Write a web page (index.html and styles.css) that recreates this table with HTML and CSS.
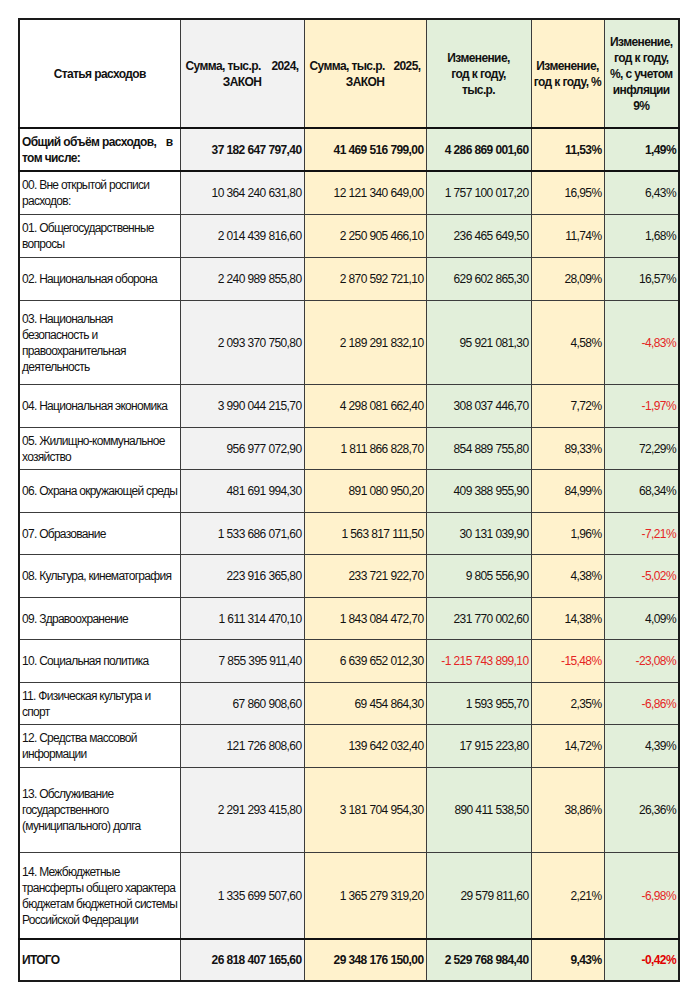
FILE: index.html
```html
<!DOCTYPE html>
<html lang="ru">
<head>
<meta charset="utf-8">
<link rel="stylesheet" href="styles.css">
</head>
<body>
<table class="budget">
  <colgroup>
    <col class="c1"><col class="c2"><col class="c3"><col class="c4"><col class="c5"><col class="c6">
  </colgroup>
  <thead>
    <tr class="head">
      <th class="name">Статья расходов</th>
      <th class="gray wide"><span class="spread"><span>Сумма, тыс.р.</span><span>2024,</span></span>ЗАКОН</th>
      <th class="yel wide"><span class="spread"><span>Сумма, тыс.р.</span><span>2025,</span></span>ЗАКОН</th>
      <th class="grn">Изменение,<br>год к году,<br>тыс.р.</th>
      <th class="yel">Изменение,<br>год к году, %</th>
      <th class="grn">Изменение,<br>год к году,<br>%, с учетом<br>инфляции<br>9%</th>
    </tr>
  </thead>
  <tbody>
    <tr class="total h42">
      <td class="name jl"><span class="spread"><span>Общий объём расходов,</span><span>в</span></span>том числе:</td>
      <td class="gray">37 182 647 797,40</td>
      <td class="yel">41 469 516 799,00</td>
      <td class="grn">4 286 869 001,60</td>
      <td class="yel">11,53%</td>
      <td class="grn">1,49%</td>
    </tr>
    <tr class="h43">
      <td class="name">00. Вне открытой росписи расходов:</td>
      <td class="gray">10 364 240 631,80</td>
      <td class="yel">12 121 340 649,00</td>
      <td class="grn">1 757 100 017,20</td>
      <td class="yel">16,95%</td>
      <td class="grn">6,43%</td>
    </tr>
    <tr class="h43">
      <td class="name">01. Общегосударственные вопросы</td>
      <td class="gray">2 014 439 816,60</td>
      <td class="yel">2 250 905 466,10</td>
      <td class="grn">236 465 649,50</td>
      <td class="yel">11,74%</td>
      <td class="grn">1,68%</td>
    </tr>
    <tr class="h43">
      <td class="name">02. Национальная оборона</td>
      <td class="gray">2 240 989 855,80</td>
      <td class="yel">2 870 592 721,10</td>
      <td class="grn">629 602 865,30</td>
      <td class="yel">28,09%</td>
      <td class="grn">16,57%</td>
    </tr>
    <tr class="h84">
      <td class="name">03. Национальная безопасность и правоохранительная деятельность</td>
      <td class="gray">2 093 370 750,80</td>
      <td class="yel">2 189 291 832,10</td>
      <td class="grn">95 921 081,30</td>
      <td class="yel">4,58%</td>
      <td class="grn neg">-4,83%</td>
    </tr>
    <tr class="h43">
      <td class="name">04. Национальная экономика</td>
      <td class="gray">3 990 044 215,70</td>
      <td class="yel">4 298 081 662,40</td>
      <td class="grn">308 037 446,70</td>
      <td class="yel">7,72%</td>
      <td class="grn neg">-1,97%</td>
    </tr>
    <tr class="h42">
      <td class="name">05. Жилищно-коммунальное хозяйство</td>
      <td class="gray">956 977 072,90</td>
      <td class="yel">1 811 866 828,70</td>
      <td class="grn">854 889 755,80</td>
      <td class="yel">89,33%</td>
      <td class="grn">72,29%</td>
    </tr>
    <tr class="h43">
      <td class="name">06. Охрана окружающей среды</td>
      <td class="gray">481 691 994,30</td>
      <td class="yel">891 080 950,20</td>
      <td class="grn">409 388 955,90</td>
      <td class="yel">84,99%</td>
      <td class="grn">68,34%</td>
    </tr>
    <tr class="h42">
      <td class="name">07. Образование</td>
      <td class="gray">1 533 686 071,60</td>
      <td class="yel">1 563 817 111,50</td>
      <td class="grn">30 131 039,90</td>
      <td class="yel">1,96%</td>
      <td class="grn neg">-7,21%</td>
    </tr>
    <tr class="h43">
      <td class="name">08. Культура, кинематография</td>
      <td class="gray">223 916 365,80</td>
      <td class="yel">233 721 922,70</td>
      <td class="grn">9 805 556,90</td>
      <td class="yel">4,38%</td>
      <td class="grn neg">-5,02%</td>
    </tr>
    <tr class="h42">
      <td class="name">09. Здравоохранение</td>
      <td class="gray">1 611 314 470,10</td>
      <td class="yel">1 843 084 472,70</td>
      <td class="grn">231 770 002,60</td>
      <td class="yel">14,38%</td>
      <td class="grn">4,09%</td>
    </tr>
    <tr class="h43">
      <td class="name">10. Социальная политика</td>
      <td class="gray">7 855 395 911,40</td>
      <td class="yel">6 639 652 012,30</td>
      <td class="grn neg">-1 215 743 899,10</td>
      <td class="yel neg">-15,48%</td>
      <td class="grn neg">-23,08%</td>
    </tr>
    <tr class="h42">
      <td class="name">11. Физическая культура и спорт</td>
      <td class="gray">67 860 908,60</td>
      <td class="yel">69 454 864,30</td>
      <td class="grn">1 593 955,70</td>
      <td class="yel">2,35%</td>
      <td class="grn neg">-6,86%</td>
    </tr>
    <tr class="h43">
      <td class="name">12. Средства массовой информации</td>
      <td class="gray">121 726 808,60</td>
      <td class="yel">139 642 032,40</td>
      <td class="grn">17 915 223,80</td>
      <td class="yel">14,72%</td>
      <td class="grn">4,39%</td>
    </tr>
    <tr class="h85">
      <td class="name">13. Обслуживание государственного (муниципального) долга</td>
      <td class="gray">2 291 293 415,80</td>
      <td class="yel">3 181 704 954,30</td>
      <td class="grn">890 411 538,50</td>
      <td class="yel">38,86%</td>
      <td class="grn">26,36%</td>
    </tr>
    <tr class="h86">
      <td class="name">14. Межбюджетные трансферты общего характера бюджетам бюджетной системы Российской Федерации</td>
      <td class="gray">1 335 699 507,60</td>
      <td class="yel">1 365 279 319,20</td>
      <td class="grn">29 579 811,60</td>
      <td class="yel">2,21%</td>
      <td class="grn neg">-6,98%</td>
    </tr>
    <tr class="total final h41">
      <td class="name">ИТОГО</td>
      <td class="gray">26 818 407 165,60</td>
      <td class="yel">29 348 176 150,00</td>
      <td class="grn">2 529 768 984,40</td>
      <td class="yel">9,43%</td>
      <td class="grn neg">-0,42%</td>
    </tr>
  </tbody>
</table>
</body>
</html>
```
FILE: styles.css
```css
html, body {
  margin: 0;
  padding: 0;
  background: #ffffff;
}

.budget {
  margin: 18px 0 0 18px;
  width: 660px;
  table-layout: fixed;
  border-collapse: collapse;
  border: 2px solid #1a1a1a;
  font-family: "Liberation Sans", Arial, sans-serif;
  font-size: 12px;
  line-height: 16px;
  letter-spacing: -0.6px;
  color: #111111;
}

.c1 { width: 161px; }
.c2 { width: 124px; }
.c3 { width: 122px; }
.c4 { width: 105px; }
.c5 { width: 73px; }
.c6 { width: 75px; }

.budget th,
.budget td {
  border: 1px solid #3c3c3c;
  padding: 0 2px 0 2px;
  vertical-align: middle;
}

.budget td {
  text-align: right;
}

.budget td.name {
  text-align: left;
  padding: 0 0 0 2px;
  letter-spacing: -0.72px;
}

.budget th {
  font-weight: bold;
  text-align: center;
  height: 107px;
  border-bottom: 2px solid #111111;
}

.budget th.name {
  letter-spacing: -0.6px;
}

.budget th.wide {
  padding: 0 5px;
}

.spread {
  display: flex;
  justify-content: space-between;
}

.gray { background: #f2f2f2; }
.yel { background: #fff2cc; }
.grn { background: #e2efda; }

.neg { color: #e52525; }

.total td {
  font-weight: bold;
}

.budget .total td.jl {
  padding-right: 7px;
  letter-spacing: -0.6px;
}

.budget tr.total:first-child td {
  border-bottom: 2px solid #111111;
}

.final td {
  border-top: 2px solid #111111;
}

.final td.neg {
  color: #e00000;
}

.h41 td { height: 40px; }
.h42 td { height: 41px; }
.h43 td { height: 42px; }
.h84 td { height: 83px; }
.h85 td { height: 84px; }
.h86 td { height: 85px; }
```
